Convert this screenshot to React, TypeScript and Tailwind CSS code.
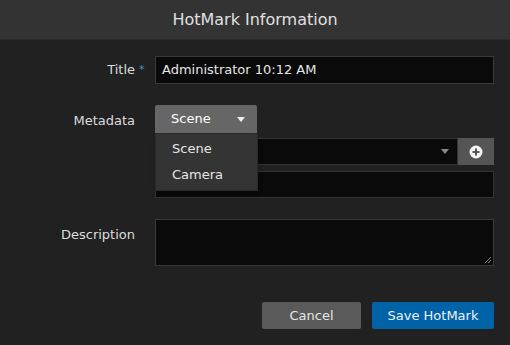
import React from "react";

export default function App() {
  const font = { fontFamily: '"DejaVu Sans", Verdana, sans-serif' };
  return (
    <div className="w-[510px] h-[345px] bg-[#212121] text-[#dcdcdc] text-[13px] overflow-hidden" style={font}>
      <div className="h-[40px] bg-[#333333] border-b border-[#2a2a2a] flex items-center justify-center text-[16px] text-[#e0e0e0]">
        HotMark Information
      </div>
      <div className="pr-[16px] pt-[16px]">
        <div className="flex items-center">
          <div className="w-[135px] flex justify-end items-center relative">
            <span>Title</span>
            <span className="absolute left-[139px] top-[4px] text-[#3f8fd6] text-[11px] leading-none">*</span>
          </div>
          <div className="ml-[20px] flex-1 h-[28px] bg-[#0a0a0a] border border-[#3a3a3a] flex items-center px-[6px] text-[#e6e6e6]">
            Administrator 10:12 AM
          </div>
        </div>

        <div className="flex items-start mt-[21px]">
          <div className="w-[135px] flex justify-end pt-[6px]">Metadata</div>
          <div className="ml-[20px] flex-1 relative">
            <div className="w-[102px] h-[28px] bg-[#666666] rounded-t-[2px] flex items-center justify-between pl-[16px] pr-[12px] text-white">
              <span>Scene</span>
              <svg width="8" height="5" viewBox="0 0 8 5"><path d="M0 0h8L4 5z" fill="#eee" /></svg>
            </div>
            <div className="mt-[5px] flex h-[27px]">
              <div className="flex-1 bg-[#0a0a0a] border border-[#333] flex items-center justify-end pr-[8px]">
                <svg width="8" height="5" viewBox="0 0 8 5"><path d="M0 0h8L4 5z" fill="#888" /></svg>
              </div>
              <div className="w-[36px] bg-[#555555] flex items-center justify-center">
                <svg width="14" height="14" viewBox="0 0 14 14">
                  <circle cx="7" cy="7" r="6.5" fill="#f2f2f2" />
                  <path d="M7 3.5v7M3.5 7h7" stroke="#555" strokeWidth="2" />
                </svg>
              </div>
            </div>
            <div className="mt-[6px] h-[27px] bg-[#0a0a0a] border border-[#333]" />
            <div className="absolute left-0 top-[28px] w-[103px] bg-[#343434] border border-[#2a2a2a] shadow-md py-[2px]">
              <div className="h-[26px] flex items-center pl-[16px] text-[#e6e6e6]">Scene</div>
              <div className="h-[26px] flex items-center pl-[16px] text-[#e6e6e6]">Camera</div>
            </div>
          </div>
        </div>

        <div className="flex items-start mt-[21px]">
          <div className="w-[135px] flex justify-end pt-[6px]">Description</div>
          <div className="ml-[20px] flex-1 h-[47px] bg-[#0a0a0a] border border-[#3a3a3a] relative">
            <svg className="absolute right-[1px] bottom-[1px]" width="8" height="8" viewBox="0 0 8 8">
              <path d="M7 1L1 7M7 4L4 7" stroke="#888" strokeWidth="1" />
            </svg>
          </div>
        </div>

        <div className="flex justify-end gap-[11px] mt-[36px]">
          <div className="w-[99px] h-[27px] bg-[#5a5a5a] rounded-[2px] flex items-center justify-center text-[#e6e6e6]">Cancel</div>
          <div className="w-[122px] h-[27px] bg-[#0063a8] rounded-[2px] flex items-center justify-center text-[#f0f0f0]">Save HotMark</div>
        </div>
      </div>
    </div>
  );
}
